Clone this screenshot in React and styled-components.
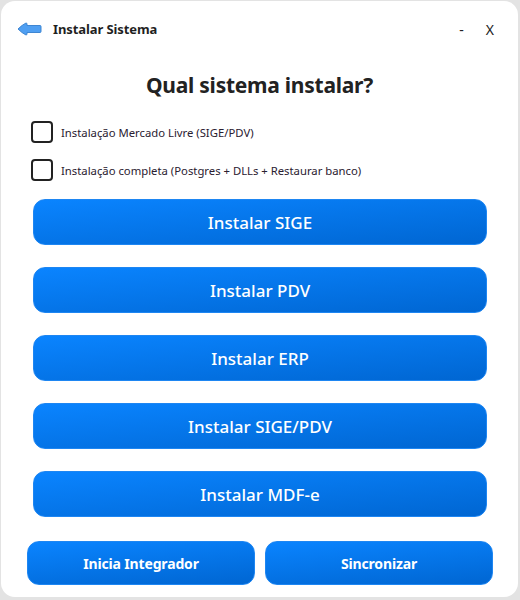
import React from "react";
import styled, { createGlobalStyle } from "styled-components";

const GlobalStyle = createGlobalStyle`
  html, body {
    margin: 0;
    padding: 0;
    background: #e3e3e3;
  }
  * {
    box-sizing: border-box;
  }
`;

const Page = styled.div`
  width: 520px;
  height: 600px;
  padding: 1px 2px 3px 1px;
  font-family: "Noto Sans", "Open Sans", sans-serif;
`;

const Win = styled.div`
  width: 517px;
  height: 596px;
  background: #ffffff;
  border-radius: 14px;
  display: flex;
  flex-direction: column;
  overflow: hidden;
`;

const TitleBar = styled.div`
  display: flex;
  align-items: center;
  height: 56px;
  padding: 0 24px 0 16px;
`;

const TitleText = styled.span`
  font-size: 13px;
  font-weight: 700;
  letter-spacing: -0.1px;
  color: #1f1f1f;
  margin-left: 11px;
  flex: 1;
`;

const WinButton = styled.span`
  font-size: 14px;
  color: #222;
  margin-left: 22px;
`;

const Heading = styled.h1`
  margin: 13px 0 0;
  text-align: center;
  font-size: 21px;
  line-height: 30px;
  font-weight: 700;
  letter-spacing: -0.25px;
  color: #222;
`;

const Options = styled.div`
  display: flex;
  flex-direction: column;
  gap: 16px;
  margin: 21px 0 0 30px;
`;

const Option = styled.label`
  display: flex;
  align-items: center;
  gap: 8px;
  font-size: 11.3px;
  color: #2a2030;
`;

const Box = styled.span`
  width: 22px;
  height: 22px;
  border: 2px solid #222;
  border-radius: 4px;
  background: #fff;
`;

const BigButtons = styled.div`
  display: flex;
  flex-direction: column;
  gap: 22px;
  margin: 18px 31px 0 32px;
`;

const Btn = styled.button`
  border: 1px solid #1e86f2;
  border-radius: 12px;
  background: linear-gradient(175deg, #0a84ff 0%, #0066d2 100%);
  color: #fff;
  font-family: inherit;
  height: ${(p) => (p.$small ? "44px" : "46px")};
  font-size: ${(p) => (p.$small ? "14px" : "17px")};
  font-weight: ${(p) => (p.$small ? 700 : 500)};
  letter-spacing: ${(p) => (p.$small ? "-0.15px" : "0")};
  padding: 0;
`;

const Footer = styled.div`
  display: grid;
  grid-template-columns: 228px 228px;
  gap: 10px;
  margin: 24px 0 0 26px;
`;

const BackArrow = () => (
  <svg width="25" height="14" viewBox="0 0 25 14">
    <path
      d="M1 7 Q5 3 9 1 Q10 1 10 2 L10 3.5 L23 3.5 Q24 3.5 24 4.5 L24 9.5 Q24 10.5 23 10.5 L10 10.5 L10 12 Q10 13 9 13 Q5 11 1 7 Z"
      fill="#4f9ff2"
      stroke="#3f86d2"
      strokeWidth="1"
      strokeLinejoin="round"
    />
  </svg>
);

const installs = ["Instalar SIGE", "Instalar PDV", "Instalar ERP", "Instalar SIGE/PDV", "Instalar MDF-e"];

export default function App() {
  return (
    <Page>
      <GlobalStyle />
      <Win>
        <TitleBar>
          <BackArrow />
          <TitleText>Instalar Sistema</TitleText>
          <WinButton>-</WinButton>
          <WinButton>X</WinButton>
        </TitleBar>
        <Heading>Qual sistema instalar?</Heading>
        <Options>
          <Option><Box />Instalação Mercado Livre (SIGE/PDV)</Option>
          <Option><Box />Instalação completa (Postgres + DLLs + Restaurar banco)</Option>
        </Options>
        <BigButtons>
          {installs.map((label) => (
            <Btn key={label}>{label}</Btn>
          ))}
        </BigButtons>
        <Footer>
          <Btn $small>Inicia Integrador</Btn>
          <Btn $small>Sincronizar</Btn>
        </Footer>
      </Win>
    </Page>
  );
}
